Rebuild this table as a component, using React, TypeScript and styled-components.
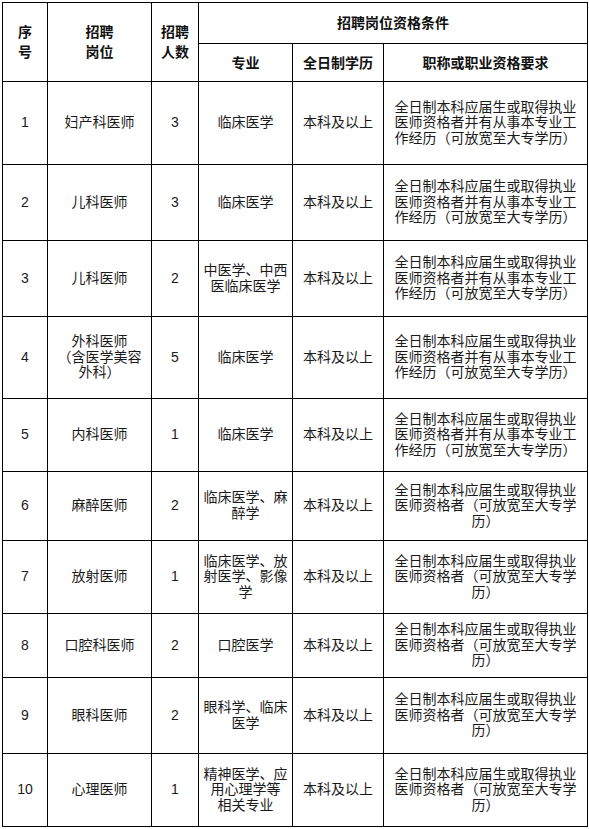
import React from "react";
import styled, { createGlobalStyle } from "styled-components";

const Global = createGlobalStyle`
  html, body { margin: 0; padding: 0; background: #fff; }
  body { padding: 2px 0 0 2px; font-family: "Liberation Sans", "Noto Sans CJK SC", sans-serif; }
`;

const Table = styled.table`
  border-collapse: collapse;
  table-layout: fixed;
  width: 585px;
  font-size: 14px;
  color: #1a1a1a;
`;

const Col = styled.col<{ $w: number }>`
  width: ${(p) => p.$w}px;
`;

const Row = styled.tr<{ $h: number }>`
  height: ${(p) => p.$h}px;
`;

const HeadCell = styled.th<{ $lh?: number }>`
  border: 1px solid #000;
  padding: 0 2px;
  font-weight: 700;
  text-align: center;
  vertical-align: middle;
  line-height: ${(p) => p.$lh ?? 20}px;
  color: #111;
`;

const Cell = styled.td`
  border: 1px solid #000;
  padding: 0 2px;
  text-align: center;
  vertical-align: middle;
  line-height: 15.6px;
  white-space: nowrap;
`;

type RowData = {
  h: number;
  no: string;
  post: string[];
  count: string;
  major: string[];
  req: string[];
};

const EDU = "本科及以上";
const longReq = ["全日制本科应届生或取得执业", "医师资格者并有从事本专业工", "作经历（可放宽至大专学历）"];
const shortReq = ["全日制本科应届生或取得执业", "医师资格者（可放宽至大专学", "历）"];

const rows: RowData[] = [
  { h: 83, no: "1", post: ["妇产科医师"], count: "3", major: ["临床医学"], req: longReq },
  { h: 76, no: "2", post: ["儿科医师"], count: "3", major: ["临床医学"], req: longReq },
  { h: 76, no: "3", post: ["儿科医师"], count: "2", major: ["中医学、中西", "医临床医学"], req: longReq },
  { h: 82, no: "4", post: ["外科医师", "（含医学美容", "外科）"], count: "5", major: ["临床医学"], req: longReq },
  { h: 73, no: "5", post: ["内科医师"], count: "1", major: ["临床医学"], req: longReq },
  { h: 69, no: "6", post: ["麻醉医师"], count: "2", major: ["临床医学、麻", "醉学"], req: shortReq },
  { h: 73, no: "7", post: ["放射医师"], count: "1", major: ["临床医学、放", "射医学、影像", "学"], req: shortReq },
  { h: 64, no: "8", post: ["口腔科医师"], count: "2", major: ["口腔医学"], req: shortReq },
  { h: 76, no: "9", post: ["眼科医师"], count: "2", major: ["眼科学、临床", "医学"], req: shortReq },
  { h: 73, no: "10", post: ["心理医师"], count: "1", major: ["精神医学、应", "用心理学等", "相关专业"], req: shortReq },
];

const Lines = ({ lines }: { lines: string[] }) => (
  <>
    {lines.map((l, i) => (
      <React.Fragment key={i}>
        {i > 0 && <br />}
        {l}
      </React.Fragment>
    ))}
  </>
);

export default function App() {
  return (
    <>
      <Global />
      <Table>
        <colgroup>
          <Col $w={45} />
          <Col $w={104} />
          <Col $w={47} />
          <Col $w={94} />
          <Col $w={91} />
          <Col $w={204} />
        </colgroup>
        <thead>
          <Row $h={41}>
            <HeadCell rowSpan={2}>序<br />号</HeadCell>
            <HeadCell rowSpan={2}>招聘<br />岗位</HeadCell>
            <HeadCell rowSpan={2}>招聘<br />人数</HeadCell>
            <HeadCell colSpan={3} $lh={16}>招聘岗位资格条件</HeadCell>
          </Row>
          <Row $h={38}>
            <HeadCell $lh={16}>专业</HeadCell>
            <HeadCell $lh={16}>全日制学历</HeadCell>
            <HeadCell $lh={16}>职称或职业资格要求</HeadCell>
          </Row>
        </thead>
        <tbody>
          {rows.map((r) => (
            <Row key={r.no} $h={r.h}>
              <Cell>{r.no}</Cell>
              <Cell><Lines lines={r.post} /></Cell>
              <Cell>{r.count}</Cell>
              <Cell><Lines lines={r.major} /></Cell>
              <Cell>{EDU}</Cell>
              <Cell><Lines lines={r.req} /></Cell>
            </Row>
          ))}
        </tbody>
      </Table>
    </>
  );
}
